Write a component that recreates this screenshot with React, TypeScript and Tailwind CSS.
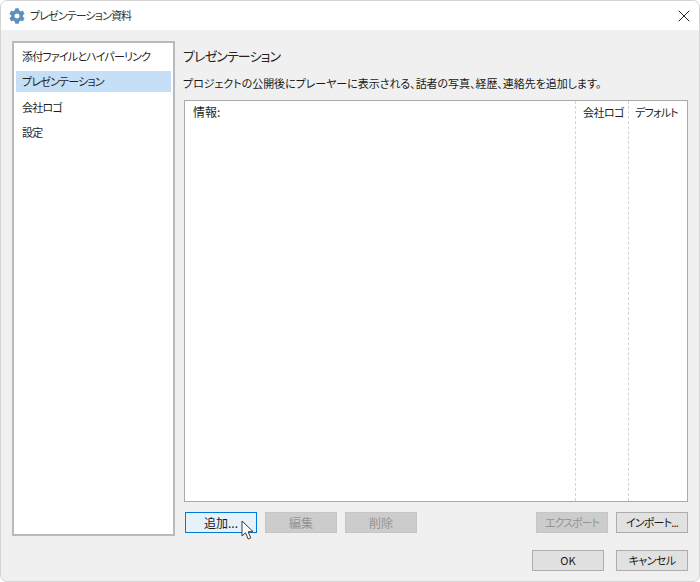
import { X } from 'lucide-react';
import { FaCog } from 'react-icons/fa';

const navItems = ['添付ファイルとハイパーリンク', 'プレゼンテーション', '会社ロゴ', '設定'];

function Btn({ label, state, className }: { label: string; state?: 'disabled' | 'hover'; className?: string }) {
  const tone =
    state === 'disabled'
      ? 'bg-[#cccccc] border-[#c6c6c6] text-[#949494]'
      : state === 'hover'
        ? 'bg-[#e5f1fb] border-[#0078d7] text-[#1a1a1a]'
        : 'bg-[#e1e1e1] border-[#adadad] text-[#1a1a1a]';
  return (
    <div className={`w-[72px] h-[21px] border flex items-center justify-center leading-none whitespace-nowrap ${tone} ${className ?? 'text-[12px]'}`}>
      {label}
    </div>
  );
}

export default function App() {
  return (
    <div className="w-[700px] h-[582px] bg-white font-['Noto_Sans_CJK_JP','Liberation_Sans',sans-serif] [font-feature-settings:'palt']">
      <div className="w-full h-full flex flex-col rounded-[7px] border border-[#d4d4d4] overflow-hidden bg-[#f0f0f0]">
        <div className="h-[29px] shrink-0 bg-white flex items-center pl-[8px] pr-[5px]">
          <FaCog size={16} className="text-[#5f8fbd]" />
          <span className="ml-[5px] text-[11px] tracking-[-0.9px] text-[#333333]">プレゼンテーション資料</span>
          <X size={20} strokeWidth={1.2} className="ml-auto text-[#222222]" />
        </div>

        <div className="flex-1 flex flex-col pl-[11px] pr-[11px] pt-[11px]">
          <div className="flex gap-[8px] h-[495px]">
            <div className="w-[163px] bg-white border-2 border-[#b9babd] px-[2px] pt-[2px] flex flex-col">
              {navItems.map((item, i) => (
                <div
                  key={item}
                  className={`h-[21.5px] mb-[4px] pl-[6px] flex items-center text-[11px] tracking-[-0.8px] whitespace-nowrap text-[#1f1f1f] ${i === 1 ? 'bg-[#c4dff6]' : ''}`}
                >
                  {item}
                </div>
              ))}
            </div>

            <div className="flex-1 flex flex-col">
              <div className="h-[59px] pt-[3px]">
                <div className="text-[13px] tracking-[-0.9px] leading-[24px] text-[#222222]">プレゼンテーション</div>
                <div className="mt-[6px] text-[11px] tracking-[-0.05px] leading-[18px] text-[#1a1a1a] whitespace-nowrap">
                  プロジェクトの公開後にプレーヤーに表示される、話者の写真、経歴、連絡先を追加します。
                </div>
              </div>

              <div className="ml-px w-[504px] h-[402px] bg-white border border-[#a9a9a9] flex">
                <div className="flex-1 pl-[8px] pt-[2px] text-[12px] leading-[18px] text-[#1f1f1f]">情報:</div>
                <div className="w-[53px] border-l border-dashed border-[#d4d4d4] pl-[7px] pt-[2px] text-[11px] tracking-[-0.5px] leading-[18px] text-[#1f1f1f] whitespace-nowrap">
                  会社ロゴ
                </div>
                <div className="w-[59px] border-l border-dashed border-[#d4d4d4] pl-[6px] pt-[2px] text-[11px] tracking-[-0.8px] leading-[18px] text-[#1f1f1f] whitespace-nowrap">
                  デフォルト
                </div>
              </div>

              <div className="relative ml-[2px] mt-[10px] flex gap-[8px]">
                <Btn label="追加..." state="hover" />
                <Btn label="編集" state="disabled" />
                <Btn label="削除" state="disabled" />
                <Btn label="エクスポート" state="disabled" className="ml-auto text-[11px] tracking-[-1px]" />
                <Btn label="インポート..." className="text-[11px] tracking-[-0.8px]" />
                <svg className="absolute left-[56px] top-[8px]" width="14" height="21" viewBox="0 0 14 21">
                  <path d="M1 1 L1 16 L4.5 12.8 L7.2 19 L9.8 17.9 L7.1 11.8 L12 11.6 Z" fill="#ffffff" stroke="#3a3a3a" strokeWidth="1" strokeLinejoin="round" />
                </svg>
              </div>
            </div>
          </div>

          <div className="mt-[14px] flex justify-end gap-[12px]">
            <Btn label="OK" className="text-[11px]" />
            <Btn label="キャンセル" className="text-[11px] tracking-[-0.6px]" />
          </div>
        </div>
      </div>
    </div>
  );
}
